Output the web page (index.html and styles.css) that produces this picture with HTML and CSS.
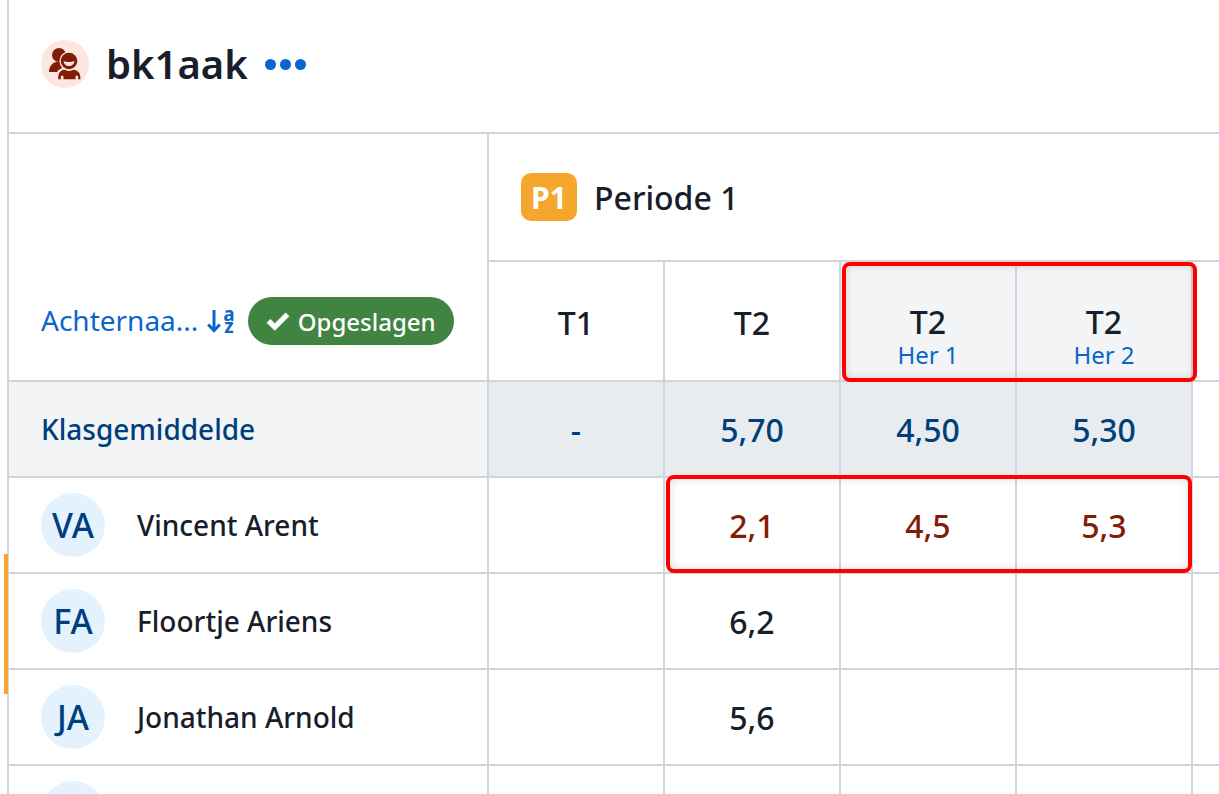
FILE: index.html
```html
<!DOCTYPE html>
<html lang="nl">
<head>
<meta charset="utf-8">
<title>bk1aak</title>
<link rel="stylesheet" href="styles.css">
</head>
<body>
<div class="page">
  <header class="title-bar">
    <span class="group-icon">
      <svg viewBox="0 0 32 32" width="32" height="32" fill="#7f1d06">
        <circle cx="10" cy="7" r="7"/>
        <path d="M0 24c0-5 3-9 7-10h6v6c-2 1-4 2-5 4z"/>
        <circle cx="20" cy="13" r="9.600" fill="#fde5e0"/>
        <circle cx="20" cy="13" r="8.300"/>
        <path fill="#fde5e0" d="M14.500 13c3 1.300 8 1.300 11 0-.3 3-2.700 5-5.500 5s-5.200-2-5.500-5z"/>
        <path stroke="#fde5e0" stroke-width="1.300" d="M8.500 32v-3c0-4 3-7 6.500-8 3 1.500 7 1.500 10 0 3.500 1 7 4 7 8v3h-3.500v-3.500h-1.300V32H13.800v-3.500h-1.300V32z"/>
      </svg>
    </span>
    <h1 class="class-name">bk1aak</h1>
    <span class="dots"><i></i><i></i><i></i></span>
  </header>

  <div class="table">
    <div class="cell sort-cell">
      <span class="sort-link">Achternaa...</span>
      <span class="sort-icon">
        <svg class="sort-arrow" viewBox="0 0 14 24" width="14" height="24" fill="none" stroke="#0a66cc" stroke-width="3">
          <path d="M7 1v20"/><path d="M1.200 15.500 7 21.500l5.800-6"/>
        </svg>
        <span class="sort-letters"><span>a</span><span>z</span></span>
      </span>
      <span class="saved">
        <svg class="saved-check" viewBox="0 0 26 22" width="24" height="20" fill="#fff">
          <path d="M9.500 21.500 0.800 12.800l3.800-3.800 4.900 4.900L21.400 2l3.800 3.800z" stroke="#fff" stroke-width=".6" stroke-linejoin="round"/>
        </svg>
        Opgeslagen
      </span>
    </div>
    <div class="cell period-cell">
      <span class="period-badge">P1</span>
      <span class="period-name">Periode 1</span>
    </div>

    <div class="cell head">T1</div>
    <div class="cell head">T2</div>
    <div class="cell head shaded"><span>T2</span><small>Her 1</small></div>
    <div class="cell head shaded"><span>T2</span><small>Her 2</small></div>
    <div class="cell filler"></div>

    <div class="cell avg-label">Klasgemiddelde</div>
    <div class="cell avg">-</div>
    <div class="cell avg">5,70</div>
    <div class="cell avg">4,50</div>
    <div class="cell avg">5,30</div>
    <div class="cell filler"></div>

    <div class="cell student"><span class="avatar">VA</span><span class="name">Vincent Arent</span></div>
    <div class="cell grade"></div>
    <div class="cell grade low">2,1</div>
    <div class="cell grade low">4,5</div>
    <div class="cell grade low">5,3</div>
    <div class="cell filler"></div>

    <div class="cell student"><span class="avatar">FA</span><span class="name">Floortje Ariens</span></div>
    <div class="cell grade"></div>
    <div class="cell grade">6,2</div>
    <div class="cell grade"></div>
    <div class="cell grade"></div>
    <div class="cell filler"></div>

    <div class="cell student"><span class="avatar">JA</span><span class="name">Jonathan Arnold</span></div>
    <div class="cell grade"></div>
    <div class="cell grade">5,6</div>
    <div class="cell grade"></div>
    <div class="cell grade"></div>
    <div class="cell filler"></div>

    <div class="cell student"><span class="avatar"></span></div>
    <div class="cell grade"></div>
    <div class="cell grade"></div>
    <div class="cell grade"></div>
    <div class="cell grade"></div>
    <div class="cell filler"></div>
  </div>

  <div class="mark-bar"></div>
  <div class="highlight highlight-head"></div>
  <div class="highlight highlight-row"></div>
</div>
</body>
</html>
```
FILE: styles.css
```css
* { box-sizing: border-box; }
html, body { margin: 0; height: 100%; overflow: hidden; background: #fff; }
body { font-family: "Noto Sans", "Open Sans", sans-serif; color: #17202a; }

.page {
  position: relative;
  height: 794px;
  margin-left: 7px;
  border-left: 2px solid #d1d5db;
}

.title-bar {
  height: 134px;
  padding: 0 0 4px 32px;
  display: flex;
  align-items: center;
  border-bottom: 2px solid #d1d5db;
}
.group-icon {
  width: 48px; height: 48px;
  border-radius: 50%;
  background: #fde5e0;
  display: flex; align-items: center; justify-content: center;
}
.class-name {
  margin: 0 0 0 17px;
  font-size: 40px;
  font-weight: 600;
  line-height: 48px;
}
.dots { display: flex; gap: 4px; margin-left: 17px; }
.dots i { width: 11px; height: 11px; border-radius: 50%; background: #0a66cc; }

.table {
  display: grid;
  height: 660px;
  overflow: hidden;
  grid-template-columns: 480px repeat(4, 176px) 1fr;
  grid-template-rows: 128px 120px 96px 96px 96px 96px 96px;
}
.cell {
  border-right: 2px solid #d1d5db;
  border-bottom: 2px solid #d1d5db;
  display: flex;
  align-items: center;
  justify-content: center;
}
.filler { border-right: 0; }

.sort-cell {
  grid-row: 1 / span 2;
  justify-content: flex-start;
  align-items: flex-end;
  padding: 0 0 35px 32px;
}
.sort-link { font-size: 28px; line-height: 46px; height: 48px; color: #0a66cc; flex: none; }
.sort-icon { display: flex; align-items: center; height: 48px; margin-left: 9px; color: #0a66cc; flex: none; }
.sort-arrow { flex: none; }
.sort-letters {
  display: flex; flex-direction: column; align-items: center;
  font-size: 19px; font-weight: 700; line-height: 12px; margin-left: 2px; padding-bottom: 2px;
}
.saved {
  height: 48px;
  margin-left: 13px;
  padding: 0 18px;
  border-radius: 24px;
  background: #418442;
  color: #fff;
  font-size: 24px;
  font-weight: 500;
  display: flex; align-items: center; gap: 8px;
  flex: none;
}
.saved-check { flex: none; }

.period-cell {
  grid-column: 2 / -1;
  border-right: 0;
  justify-content: flex-start;
  padding: 0 0 0 32px;
  gap: 17px;
}
.period-badge {
  width: 56px; height: 48px;
  border-radius: 10px;
  background: #f4a72c;
  color: #fff;
  font-size: 30px; font-weight: 700;
  display: flex; align-items: center; justify-content: center;
}
.period-name { font-size: 32px; font-weight: 500; }

.head {
  flex-direction: column;
  font-size: 32px;
  font-weight: 500;
  line-height: 36px;
  padding-top: 4px;
}
.head small { font-size: 24px; line-height: 30px; color: #0a66cc; font-weight: 400; }
.shaded { background: #f3f4f6; padding-top: 32px; }

.avg-label {
  background: #f3f4f6;
  justify-content: flex-start;
  padding-left: 32px;
  font-size: 28px; font-weight: 500;
  color: #003f7d;
}
.avg { background: #e9ecef; font-size: 32px; font-weight: 500; color: #003f7d; }

.student { justify-content: flex-start; padding-left: 32px; }
.avatar {
  width: 64px; height: 64px; border-radius: 50%;
  background: #e3f2fd;
  color: #003f7d;
  font-size: 34px; font-weight: 500;
  display: flex; align-items: center; justify-content: center;
  flex: none;
}
.name { margin-left: 32px; font-size: 28px; font-weight: 500; }
.grade { font-size: 32px; font-weight: 500; }
.low { color: #7f1d06; }

.mark-bar {
  position: absolute;
  left: -5px; top: 554px;
  width: 4px; height: 140px;
  background: #f4a72c;
}
.highlight {
  position: absolute;
  border: 4px solid #f00;
  border-radius: 8px;
  box-shadow: inset 0 0 8px rgba(0,0,0,.14);
  pointer-events: none;
}
.highlight-head { left: 833px; top: 262px; width: 355px; height: 120px; }
.highlight-row { left: 657px; top: 475px; width: 526px; height: 98px; }
```
